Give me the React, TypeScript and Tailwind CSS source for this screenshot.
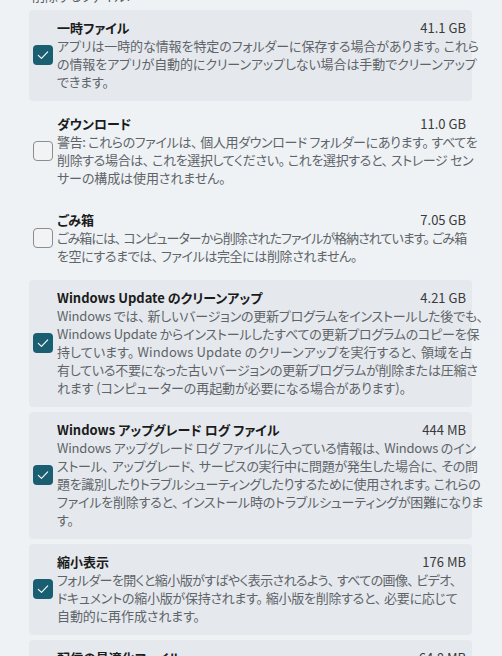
import React from "react";

type L = { t: string; c?: string };

type Item = {
  title: string;
  size: string;
  checked: boolean;
  lines: L[];
};

const items: Item[] = [
  {
    title: "一時ファイル",
    size: "41.1 GB",
    checked: true,
    lines: [
      { t: "アプリは一時的な情報を特定のフォルダーに保存する場合があります。これら" },
      { t: "の情報をアプリが自動的にクリーンアップしない場合は手動でクリーンアップ" },
      { t: "できます。" },
    ],
  },
  {
    title: "ダウンロード",
    size: "11.0 GB",
    checked: false,
    lines: [
      { t: "警告: これらのファイルは、個人用ダウンロード フォルダーにあります。すべてを", c: "tracking-[-0.35px]" },
      { t: "削除する場合は、これを選択してください。これを選択すると、ストレージ セン", c: "tracking-[-0.35px]" },
      { t: "サーの構成は使用されません。" },
    ],
  },
  {
    title: "ごみ箱",
    size: "7.05 GB",
    checked: false,
    lines: [
      { t: "ごみ箱には、コンピューターから削除されたファイルが格納されています。ごみ箱", c: "tracking-[-0.95px]" },
      { t: "を空にするまでは、ファイルは完全には削除されません。", c: "tracking-[-0.4px]" },
    ],
  },
  {
    title: "Windows Update のクリーンアップ",
    size: "4.21 GB",
    checked: true,
    lines: [
      { t: "Windows では、新しいバージョンの更新プログラムをインストールした後でも、", c: "tracking-[-0.2px]" },
      { t: "Windows Update からインストールしたすべての更新プログラムのコピーを保", c: "tracking-[-0.2px]" },
      { t: "持しています。Windows Update のクリーンアップを実行すると、領域を占", c: "tracking-[0.1px]" },
      { t: "有している不要になった古いバージョンの更新プログラムが削除または圧縮さ", c: "tracking-[-0.25px]" },
      { t: "れます (コンピューターの再起動が必要になる場合があります)。" },
    ],
  },
  {
    title: "Windows アップグレード ログ ファイル",
    size: "444 MB",
    checked: true,
    lines: [
      { t: "Windows アップグレード ログ ファイルに入っている情報は、Windows のイン", c: "tracking-[-0.2px]" },
      { t: "ストール、アップグレード、サービスの実行中に問題が発生した場合に、その問", c: "tracking-[-0.3px]" },
      { t: "題を識別したりトラブルシューティングしたりするために使用されます。これらの", c: "tracking-[-0.35px]" },
      { t: "ファイルを削除すると、インストール時のトラブルシューティングが困難になりま", c: "tracking-[-0.2px]" },
      { t: "す。" },
    ],
  },
  {
    title: "縮小表示",
    size: "176 MB",
    checked: true,
    lines: [
      { t: "フォルダーを開くと縮小版がすばやく表示されるよう、すべての画像、ビデオ、", c: "tracking-[-0.6px]" },
      { t: "ドキュメントの縮小版が保持されます。縮小版を削除すると、必要に応じて", c: "tracking-[-0.25px]" },
      { t: "自動的に再作成されます。" },
    ],
  },
  {
    title: "配信の最適化ファイル",
    size: "64.8 MB",
    checked: true,
    lines: [
      { t: "配信の最適化ファイルは、以前にこのコンピューターにダウンロードされたファ" },
      { t: "イルで、現在使用されていない場合は削除できます。" },
    ],
  },
];

function Checkbox({ checked }: { checked: boolean }) {
  if (checked) {
    return (
      <div className="w-[20px] h-[20px] shrink-0 rounded-[4px] bg-[#1a5e72] flex items-center justify-center">
        <svg width="14" height="14" viewBox="0 0 14 14" fill="none">
          <polyline
            points="2.3,7.4 5.5,10.4 11.7,3.8"
            stroke="#ffffff"
            strokeWidth="1.1"
            strokeLinecap="round"
            strokeLinejoin="round"
          />
        </svg>
      </div>
    );
  }
  return (
    <div className="w-[20px] h-[20px] shrink-0 rounded-[4px] bg-[#f1f3f5] border border-[#8b8d90]" />
  );
}

function Line({ line }: { line: L }) {
  const parts = line.t.split(/([、。])/);
  return (
    <div
      className={
        "leading-[18px] text-[#606468] whitespace-nowrap " + (line.c ?? "tracking-[-0.1px]")
      }
    >
      {parts.map((p, i) =>
        p === "、" || p === "。" ? (
          <span key={i} className="mr-[3px]">
            {p}
          </span>
        ) : (
          <React.Fragment key={i}>{p}</React.Fragment>
        )
      )}
    </div>
  );
}

export default function App() {
  return (
    <div className="w-[502px] h-[656px] overflow-hidden bg-[#eef2f5] [font-family:'Noto_Sans_CJK_JP',sans-serif] [font-feature-settings:'palt'] text-[13px]">
      <div className="pl-[29px] pr-[30px]">
        <div className="-mt-[13px] mb-[5px] h-[18px] leading-[18px] pl-[3px] text-[#555a60] whitespace-nowrap">
          削除するファイル:
        </div>
        <div className="flex flex-col gap-[5px]">
          {items.map((it) => (
            <div
              key={it.title}
              className={
                "flex items-center rounded-[4px] pl-[4px] pr-[6px] pt-[9px] pb-[10px] " +
                (it.checked ? "bg-[#e5e9ee]" : "bg-transparent")
              }
            >
              <Checkbox checked={it.checked} />
              <div className="ml-[4px] flex-1 min-w-0">
                <div className="flex justify-between leading-[18px]">
                  <span className="font-bold text-[#1b1b1b] whitespace-nowrap">{it.title}</span>
                  <span className="text-[#3a3a3a] whitespace-nowrap">{it.size}</span>
                </div>
                {it.lines.map((l, i) => (
                  <Line key={i} line={l} />
                ))}
              </div>
            </div>
          ))}
        </div>
      </div>
    </div>
  );
}
